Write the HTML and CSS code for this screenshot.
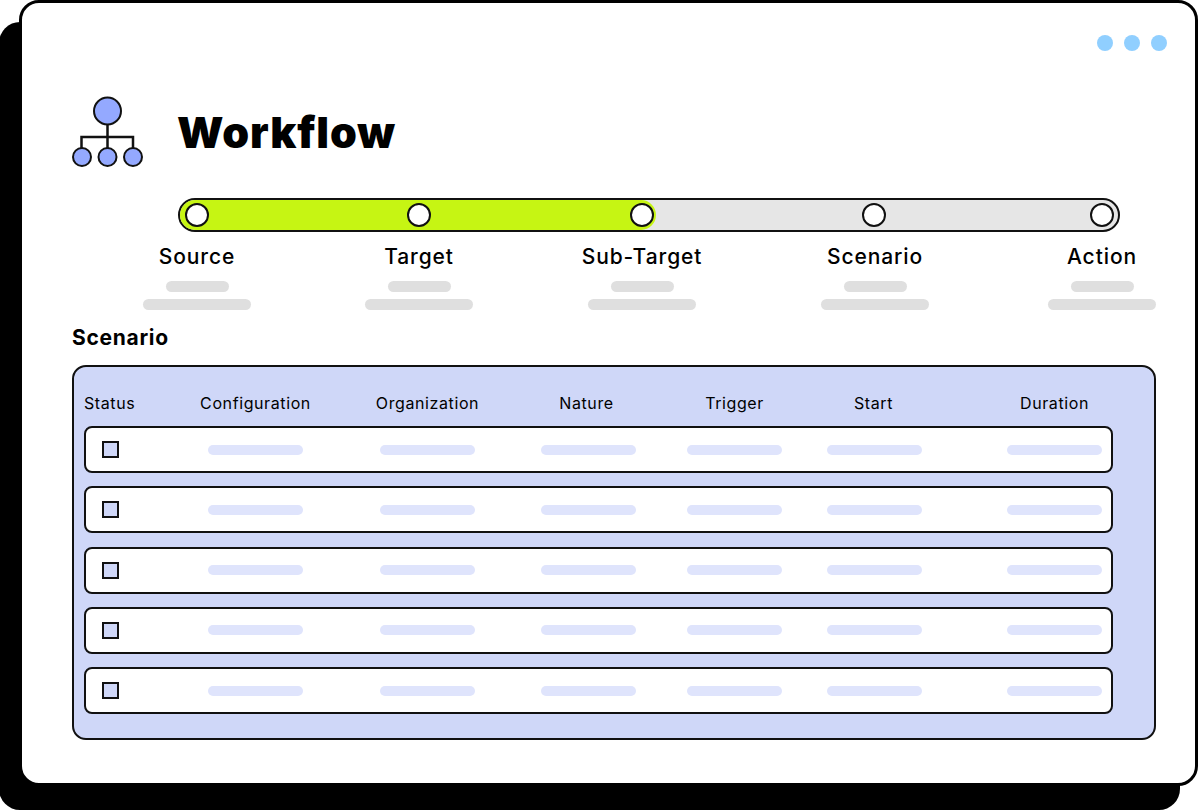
FILE: index.html
```html
<!DOCTYPE html>
<html lang="en">
<head>
    <meta charset="UTF-8">
    <meta name="viewport" content="width=device-width, initial-scale=1.0">
    <title>Workflow</title>
    <link rel="stylesheet" href="styles.css">
</head>
<body>
<div class="card">
    <div class="dots">
        <span class="dot"></span>
        <span class="dot"></span>
        <span class="dot"></span>
    </div>

    <header class="title-row">
        <svg class="title-icon" width="72" height="72" viewBox="0 0 72 72" aria-hidden="true">
            <path class="icon-line" d="M35.5 29V52M9.5 52V41H61V52"/>
            <circle class="icon-node" cx="35.5" cy="15" r="13.5"/>
            <circle class="icon-node" cx="10" cy="61" r="9"/>
            <circle class="icon-node" cx="35.5" cy="61" r="9"/>
            <circle class="icon-node" cx="61" cy="61" r="9"/>
        </svg>
        <h1>Workflow</h1>
    </header>

    <!-- Progress track -->
    <div class="track">
        <div class="track-fill"></div>
        <span class="knob"></span>
        <span class="knob"></span>
        <span class="knob"></span>
        <span class="knob"></span>
        <span class="knob"></span>
    </div>

    <div class="steps">
        <div class="step"><span class="step-name">Source</span><span class="pill-short"></span><span class="pill-long"></span></div>
        <div class="step"><span class="step-name">Target</span><span class="pill-short"></span><span class="pill-long"></span></div>
        <div class="step"><span class="step-name">Sub-Target</span><span class="pill-short"></span><span class="pill-long"></span></div>
        <div class="step"><span class="step-name">Scenario</span><span class="pill-short"></span><span class="pill-long"></span></div>
        <div class="step"><span class="step-name">Action</span><span class="pill-short"></span><span class="pill-long"></span></div>
    </div>

    <h2>Scenario</h2>

    <!-- Scenario table -->
    <div class="panel">
        <div class="table-head">
            <div class="head-status">Status</div>
            <div class="head-cell">Configuration</div>
            <div class="head-cell">Organization</div>
            <div class="head-cell">Nature</div>
            <div class="head-cell">Trigger</div>
            <div class="head-cell">Start</div>
            <div class="head-cell">Duration</div>
        </div>
        <div class="table-row"><span class="check"></span><span class="cell"></span><span class="cell"></span><span class="cell"></span><span class="cell"></span><span class="cell"></span><span class="cell"></span></div>
        <div class="table-row"><span class="check"></span><span class="cell"></span><span class="cell"></span><span class="cell"></span><span class="cell"></span><span class="cell"></span><span class="cell"></span></div>
        <div class="table-row"><span class="check"></span><span class="cell"></span><span class="cell"></span><span class="cell"></span><span class="cell"></span><span class="cell"></span><span class="cell"></span></div>
        <div class="table-row"><span class="check"></span><span class="cell"></span><span class="cell"></span><span class="cell"></span><span class="cell"></span><span class="cell"></span><span class="cell"></span></div>
        <div class="table-row"><span class="check"></span><span class="cell"></span><span class="cell"></span><span class="cell"></span><span class="cell"></span><span class="cell"></span><span class="cell"></span></div>
    </div>
</div>
</body>
</html>
```

FILE: styles.css
```css
html, body {
    margin: 0;
    padding: 0;
    height: 810px;
    overflow: hidden;
    background: #fff;
}

body {
    font-family: "Inter", "Liberation Sans", sans-serif;
    color: #000;
}

.card {
    box-sizing: border-box;
    width: 1179px;
    height: 786px;
    margin-left: 19px;
    padding: 32px 39px 0 50px;
    background: #fff;
    border: 3px solid #000;
    border-radius: 20px;
    box-shadow: -19px 23px 0 1px #000;
}

.dots {
    display: flex;
    justify-content: flex-end;
    gap: 11px;
    margin-right: -11px;
}

.dot {
    width: 16px;
    height: 16px;
    border-radius: 50%;
    background: #90cfff;
}

.title-row {
    display: flex;
    align-items: center;
    gap: 33px;
    margin-top: 45px;
    height: 72px;
}

.title-icon {
    flex: none;
}

.icon-line {
    fill: none;
    stroke: #111;
    stroke-width: 2.5;
}

.icon-node {
    fill: #94a9ff;
    stroke: #111;
    stroke-width: 2;
}

h1 {
    margin: 0;
    font-size: 43px;
    line-height: 72px;
    font-weight: 900;
    letter-spacing: 0.9px;
}

.track {
    position: relative;
    box-sizing: border-box;
    display: grid;
    grid-template-columns: 222.5px 222.5px 232.5px 227.5px 24px;
    align-items: center;
    width: 942px;
    height: 34px;
    margin: 30px 0 0 106px;
    padding-left: 4.5px;
    background: #e6e6e6;
    border: 2.5px solid #111;
    border-radius: 18px;
    overflow: hidden;
}

.track-fill {
    position: absolute;
    left: 0;
    top: 0;
    bottom: 0;
    width: 476px;
    background: #c6f513;
    border-radius: 0 16px 16px 0;
}

.knob {
    position: relative;
    box-sizing: border-box;
    width: 24px;
    height: 24px;
    background: #fff;
    border: 2px solid #111;
    border-radius: 50%;
}

.steps {
    display: grid;
    grid-template-columns: 222px 223px 233px 227px 108px;
    margin: 12px 0 0 71px;
}

.step {
    display: flex;
    flex-direction: column;
    align-items: center;
    width: 108px;
}

.step-name {
    font-size: 21px;
    line-height: 26px;
    font-weight: 500;
    letter-spacing: 0.9px;
    white-space: nowrap;
}

.pill-short,
.pill-long {
    height: 11px;
    border-radius: 6px;
    background: #dfdfdf;
}

.pill-short {
    width: 63px;
    margin-top: 11px;
}

.pill-long {
    width: 108px;
    margin-top: 7px;
}

h2 {
    margin: 15px 0 0;
    font-size: 21px;
    line-height: 26px;
    font-weight: 700;
    letter-spacing: 0.7px;
}

.panel {
    box-sizing: border-box;
    width: 1084px;
    height: 375px;
    margin-top: 14px;
    padding: 0 10px;
    background: #cfd7f8;
    border: 2px solid #111;
    border-radius: 14px;
}

.table-head,
.table-row {
    display: grid;
    align-items: center;
}

.table-head {
    grid-template-columns: 124px 172px 159px 148px 139px 181px 95px;
    box-sizing: border-box;
    height: 59px;
    padding-top: 13px;
    font-size: 16px;
    letter-spacing: 0.6px;
}

.head-cell {
    display: flex;
    justify-content: center;
    width: 95px;
    white-space: nowrap;
}

.table-row {
    grid-template-columns: 122px 172px 161px 146px 140px 180px 95px;
    box-sizing: border-box;
    width: 1029px;
    height: 47px;
    margin-bottom: 13.3px;
    background: #fff;
    border: 2px solid #111;
    border-radius: 8px;
}

.check {
    box-sizing: border-box;
    width: 17px;
    height: 17px;
    margin-left: 16px;
    background: #cfd7f8;
    border: 2px solid #111;
}

.cell {
    width: 95px;
    height: 10px;
    border-radius: 5px;
    background: #dfe4fc;
}
```
